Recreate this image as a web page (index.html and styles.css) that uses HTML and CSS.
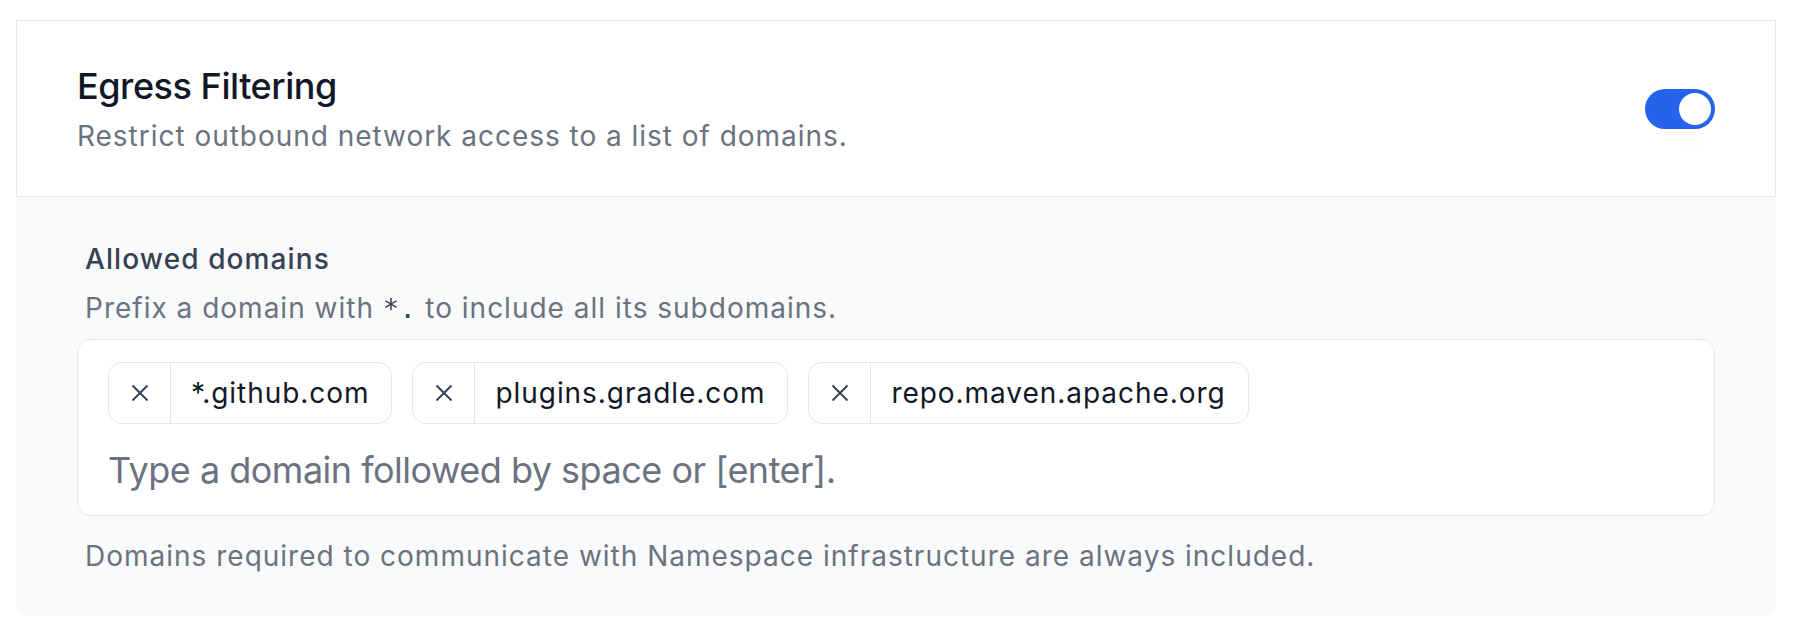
FILE: index.html
```html
<!DOCTYPE html>
<html lang="en">

<head>
  <meta charset="UTF-8">
  <title>Egress Filtering</title>
  <link rel="stylesheet" href="styles.css">
</head>

<body>

  <div class="panel">
    <div class="panel-head">
      <div class="head-text">
        <h2 class="title">Egress Filtering</h2>
        <p class="subtitle">Restrict outbound network access to a list of domains.</p>
      </div>
      <button class="switch on" type="button" role="switch" aria-checked="true"><span class="knob"></span></button>
    </div>

    <div class="panel-body">
      <label class="field-label" for="domainInput">Allowed domains</label>
      <p class="field-hint">Prefix a domain with <code>*.</code> to include all its subdomains.</p>

      <div class="tag-box">
        <div class="tags">
          <span class="tag">
            <button class="tag-remove" type="button" aria-label="Remove">
              <svg viewBox="0 0 24 24"><path d="M6 18 18 6M6 6l12 12" /></svg>
            </button>
            <span class="tag-text">*.github.com</span>
          </span>
          <span class="tag">
            <button class="tag-remove" type="button" aria-label="Remove">
              <svg viewBox="0 0 24 24"><path d="M6 18 18 6M6 6l12 12" /></svg>
            </button>
            <span class="tag-text">plugins.gradle.com</span>
          </span>
          <span class="tag">
            <button class="tag-remove" type="button" aria-label="Remove">
              <svg viewBox="0 0 24 24"><path d="M6 18 18 6M6 6l12 12" /></svg>
            </button>
            <span class="tag-text">repo.maven.apache.org</span>
          </span>
        </div>
        <input type="text" id="domainInput" class="tag-input" placeholder="Type a domain followed by space or [enter].">
      </div>

      <p class="field-note">Domains required to communicate with Namespace infrastructure are always included.</p>
    </div>
  </div>

</body>

</html>
```

FILE: styles.css
```css
body {
  margin: 0;
  background: #fff;
  font-family: Inter, 'Noto Sans', sans-serif;
  color: #111827;
}

.panel {
  width: 1760px;
  margin: 20px 0 0 16px;
}

.panel-head {
  display: flex;
  align-items: center;
  justify-content: space-between;
  padding: 37px 60px;
  border: 1px solid #e5e7eb;
  background: #fff;
}

.title {
  margin: 0;
  font-size: 36px;
  line-height: 56px;
  font-weight: 500;
  letter-spacing: -0.45px;
  color: #111827;
}

.subtitle {
  margin: 0;
  font-size: 28px;
  line-height: 45px;
  letter-spacing: 0.97px;
  color: #6b7280;
}

.switch {
  position: relative;
  width: 70px;
  height: 40px;
  padding: 0;
  border: none;
  border-radius: 20px;
  background: #e5e7eb;
  cursor: pointer;
}

.switch.on {
  background: #2563eb;
}

.knob {
  position: absolute;
  top: 4px;
  left: 4px;
  width: 32px;
  height: 32px;
  border-radius: 50%;
  background: #fff;
  box-shadow: 0 34px 12px -6px rgba(0, 0, 0, 0.012);
}

.switch.on .knob {
  left: 34px;
}

.panel-body {
  padding: 42px 61px 40px;
  background: #f9fafb;
  border-radius: 0 0 12px 12px;
}

.field-label {
  display: block;
  padding-left: 8px;
  font-size: 28px;
  line-height: 40px;
  font-weight: 500;
  letter-spacing: 1.1px;
  color: #374151;
}

.field-hint {
  margin: 9px 0 10px;
  padding-left: 8px;
  font-size: 28px;
  line-height: 40px;
  letter-spacing: 1px;
  color: #6b7280;
}

.field-hint code {
  font-family: 'DejaVu Sans Mono', 'Liberation Mono', monospace;
  font-size: 27px;
  letter-spacing: 0.5px;
  color: #374151;
}

.tag-box {
  padding: 22px 30px 17px;
  background: #fff;
  border: 1px solid #e5e7eb;
  border-radius: 14px;
}

.tags {
  display: flex;
  flex-wrap: wrap;
  gap: 20px;
  margin-bottom: 18px;
}

.tag {
  display: flex;
  align-items: stretch;
  height: 62px;
  box-sizing: border-box;
  border: 1px solid #e5e7eb;
  border-radius: 14px;
  background: #fff;
}

.tag-remove {
  display: flex;
  align-items: center;
  justify-content: center;
  width: 62px;
  padding: 0;
  border: none;
  border-right: 1px solid #e5e7eb;
  background: none;
  cursor: pointer;
}

.tag-remove svg {
  width: 30px;
  height: 30px;
  fill: none;
  stroke: #374151;
  stroke-width: 1.5;
}

.tag-text {
  display: flex;
  align-items: center;
  padding: 0 22px 0 20px;
  font-size: 28px;
  letter-spacing: 0.95px;
  color: #111827;
}

.tag-input {
  display: block;
  width: 100%;
  height: 56px;
  padding: 0;
  border: none;
  outline: none;
  background: transparent;
  font-family: inherit;
  font-size: 36px;
  letter-spacing: -0.5px;
  color: #111827;
}

.tag-input::placeholder {
  color: #6b7280;
}

.field-note {
  margin: 20px 0 0;
  padding-left: 8px;
  font-size: 28px;
  line-height: 40px;
  letter-spacing: 1px;
  color: #6b7280;
}
```
